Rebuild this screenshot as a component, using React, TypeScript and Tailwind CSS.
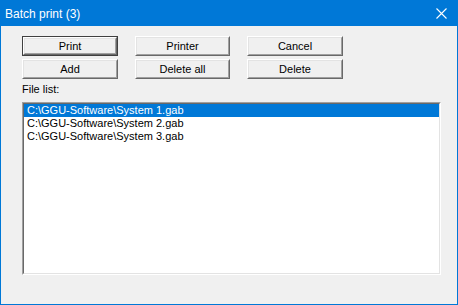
const files = [
  "C:\\GGU-Software\\System 1.gab",
  "C:\\GGU-Software\\System 2.gab",
  "C:\\GGU-Software\\System 3.gab",
];

const WinButton = ({ label, primary }: { label: string; primary?: boolean }) => (
  <div className={primary ? "h-[20px] border border-[#404040]" : "h-[20px]"}>
    <div className="h-full border border-t-white border-l-white border-b-[#696969] border-r-[#696969]">
      <div className="h-full flex items-center justify-center border border-t-[#e3e3e3] border-l-[#e3e3e3] border-b-[#a0a0a0] border-r-[#a0a0a0] bg-[#f0f0f0] text-[11px] leading-none text-black">
        {label}
      </div>
    </div>
  </div>
);

export default function App() {
  return (
    <div
      className="w-[458px] h-[305px] flex flex-col bg-[#0078d7] p-px"
      style={{ fontFamily: '"Liberation Sans", Arial, sans-serif' }}
    >
      <div className="h-[25px] flex items-center justify-between pl-[4px] pr-[10px] text-white text-[12px]">
        <span>Batch print (3)</span>
        <svg width="11" height="11" viewBox="0 0 11 11" className="block">
          <path d="M0.5 0.5 L10.5 10.5 M10.5 0.5 L0.5 10.5" stroke="white" strokeWidth="1.1" />
        </svg>
      </div>
      <div className="flex-1 bg-[#f0f0f0] flex flex-col pt-[10px] pl-[21px] pr-[16px] pb-[29px]">
        <div className="grid grid-cols-[96px_95px_96px] gap-x-[17px] gap-y-[3px]">
          <WinButton label="Print" primary />
          <WinButton label="Printer" />
          <WinButton label="Cancel" />
          <WinButton label="Add" />
          <WinButton label="Delete all" />
          <WinButton label="Delete" />
        </div>
        <div className="mt-[4px] h-[13px] text-[11px] leading-[13px] text-black">File list:</div>
        <div className="mt-[6px] flex-1 border border-t-[#a0a0a0] border-l-[#a0a0a0] border-b-white border-r-white">
          <div className="h-full bg-white border border-t-[#696969] border-l-[#696969] border-b-[#e3e3e3] border-r-[#e3e3e3]">
            {files.map((f, i) => (
              <div
                key={f}
                className={
                  i === 0
                    ? "h-[13px] leading-[13px] pl-[3px] text-[11px] bg-[#0078d7] text-white"
                    : "h-[13px] leading-[13px] pl-[3px] text-[11px] text-black"
                }
              >
                {f}
              </div>
            ))}
          </div>
        </div>
      </div>
    </div>
  );
}
